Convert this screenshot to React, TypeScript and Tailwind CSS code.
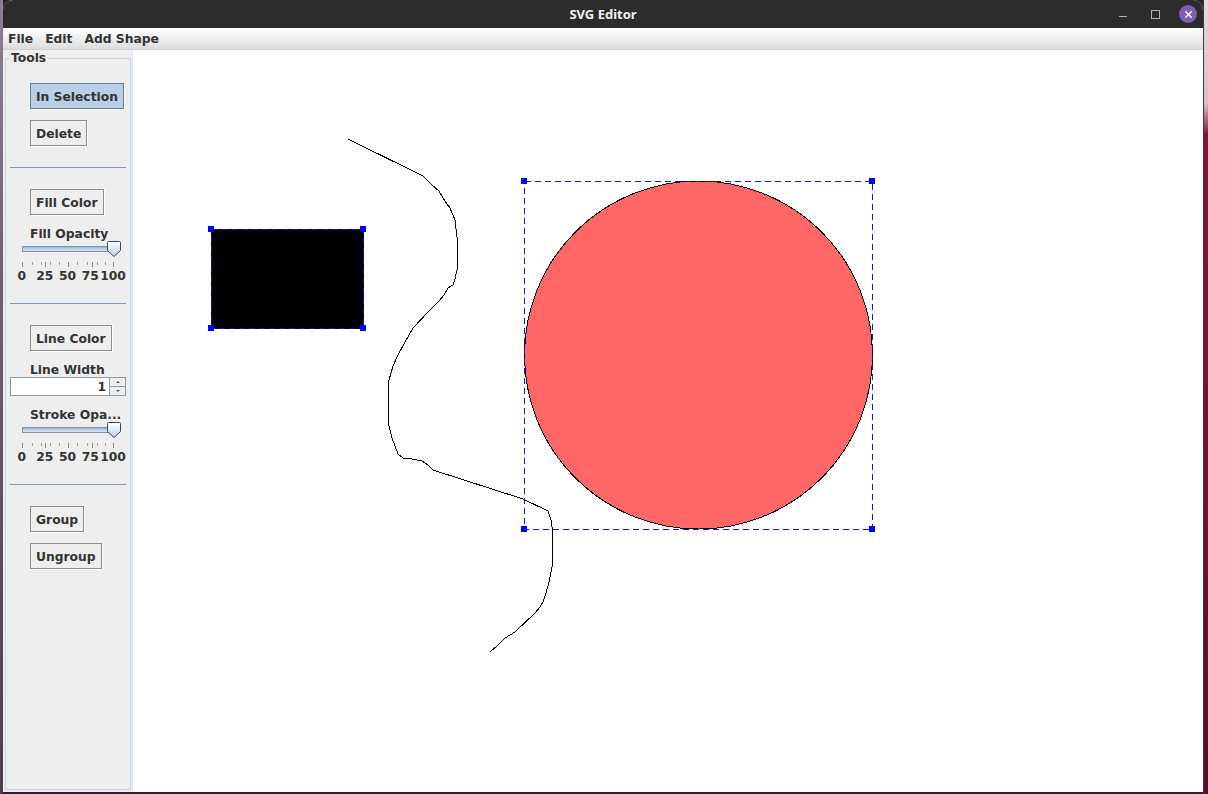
import { useState } from "react";
import { X } from "lucide-react";

const font = "font-['DejaVu_Sans','Liberation_Sans',sans-serif]";

const scribble =
  "M348 139 L423 176 L427 180 L432 185 L439 191 L443 198 L447 204 L450 208 L455 220 L457 237 L457 270 L455 279 L453 285 L448 288 L444 295 L439 301 L428 312 L413 328 L409 335 L405 342 L397 357 L393 366 L391 373 L389 380 L388 400 L388 422 L392 438 L398 454 L403 458 L412 459 L422 461 L428 465 L433 470 L523 499 L548 511 L551 520 L552 527 L553 562 L551 572 L549 582 L546 593 L543 602 L540 607 L535 613 L515 632 L505 638 L497 646 L490 652";

function ToolButton({
  label,
  active,
  onClick,
  className = "",
}: {
  label: string;
  active?: boolean;
  onClick?: () => void;
  className?: string;
}) {
  return (
    <button
      type="button"
      onClick={onClick}
      className={`ml-[24px] block h-[26px] self-start border px-[5px] pt-[2px] text-[12.3px] font-bold leading-none text-[#333333] shadow-[1px_1px_0_#ffffff] ${
        active ? "border-[#63829f] bg-[#b8cfe5]" : "border-[#8e8e8e] bg-[#eeeeee]"
      } ${className}`}
    >
      {label}
    </button>
  );
}

function Separator({ className = "" }: { className?: string }) {
  return <div className={`ml-[4px] h-px w-[116px] shrink-0 bg-[#7d9abb] ${className}`} />;
}

function PanelLabel({ text, className = "" }: { text: string; className?: string }) {
  return (
    <div className={`ml-[24px] h-[16px] whitespace-nowrap pt-px text-[12.3px] font-bold leading-[16px] text-[#333333] ${className}`}>
      {text}
    </div>
  );
}

function OpacitySlider({ id }: { id: string }) {
  const minor = [32, 41, 50, 59, 77, 87, 97, 105];
  const major = [22, 45, 68, 92, 113];
  return (
    <div className="ml-[4px] w-[116px]">
      <svg width="116" height="26" viewBox="10 241 116 26" className="block">
        <defs>
          <linearGradient id={`${id}-track`} x1="0" y1="0" x2="0" y2="1">
            <stop offset="0" stopColor="#8fa9c8" />
            <stop offset="0.5" stopColor="#c3d4e8" />
            <stop offset="1" stopColor="#dfe8f2" />
          </linearGradient>
          <linearGradient id={`${id}-thumb`} x1="0" y1="0" x2="0" y2="1">
            <stop offset="0" stopColor="#ffffff" />
            <stop offset="1" stopColor="#bdd0e6" />
          </linearGradient>
        </defs>
        <rect x="22.5" y="246.5" width="93" height="5" fill={`url(#${id}-track)`} stroke="#7f93ab" />
        <path
          d="M107.5 242.5 Q107.5 241.5 108.5 241.5 L119.5 241.5 Q120.5 241.5 120.5 242.5 L120.5 250.5 L114 256.5 L107.5 250.5 Z"
          fill={`url(#${id}-thumb)`}
          stroke="#3d4654"
        />
        {minor.map((x) => (
          <line key={x} x1={x + 0.5} x2={x + 0.5} y1="262" y2="265" stroke="#a0a0a0" />
        ))}
        {major.map((x) => (
          <line key={x} x1={x + 0.5} x2={x + 0.5} y1="262" y2="267" stroke="#8a8a8a" />
        ))}
      </svg>
      <div className="flex h-[16px] w-[116px] pl-[0.5px] pt-px text-[12.3px] font-bold leading-[16px] text-[#333333]">
        {["0", "25", "50", "75", "100"].map((t) => (
          <span key={t} className="flex w-[22.8px] shrink-0 justify-center whitespace-nowrap">
            {t}
          </span>
        ))}
      </div>
    </div>
  );
}

function Spinner({ value }: { value: number }) {
  return (
    <div className="ml-[4px] flex h-[19px] w-[116px] border border-[#8e9aa6] bg-white">
      <div className="flex-1 pr-[3px] text-right text-[12.3px] font-bold leading-[18px] text-[#333333]">{value}</div>
      <div className="flex w-[16px] flex-col border-l border-[#8e9aa6] bg-[#eeeeee]">
        <div className="flex flex-1 items-center justify-center border-b border-[#8e9aa6]">
          <span className="h-0 w-0 border-x-[2px] border-b-[2px] border-x-transparent border-b-[#555555]" />
        </div>
        <div className="flex flex-1 items-center justify-center">
          <span className="h-0 w-0 border-x-[2px] border-t-[2px] border-x-transparent border-t-[#555555]" />
        </div>
      </div>
    </div>
  );
}

function Handle({ x, y }: { x: number; y: number }) {
  return <rect x={x - 3} y={y - 3} width="6" height="6" fill="#0000ff" />;
}

function Canvas() {
  return (
    <div className="min-w-0 flex-1 bg-white">
      <svg width="1070" height="742" viewBox="133 50 1070 742" className="block" shapeRendering="crispEdges">
        <rect x="211.5" y="229.5" width="152" height="99" fill="#000000" stroke="#000000" />
        <rect x="211.5" y="229.5" width="152" height="99" fill="none" stroke="#1414c8" strokeDasharray="6 4" />
        <Handle x={211} y={229} />
        <Handle x={363} y={229} />
        <Handle x={211} y={328} />
        <Handle x={363} y={328} />

        <path d={scribble} fill="none" stroke="#000000" strokeWidth="1" />

        <circle cx="698.5" cy="355" r="174" fill="#ff6666" stroke="#000000" />
        <rect x="524.5" y="181.5" width="348" height="348" fill="none" stroke="#1414c8" strokeDasharray="6 4" />
        <Handle x={524} y={181} />
        <Handle x={872} y={181} />
        <Handle x={524} y={529} />
        <Handle x={872} y={529} />
      </svg>
    </div>
  );
}

export default function App() {
  const [selecting, setSelecting] = useState(true);

  return (
    <div className={`flex h-[794px] w-[1208px] overflow-hidden bg-[#2a2230] ${font}`}>
      <div className="h-full w-[3px] shrink-0 bg-[linear-gradient(to_bottom,#8d7f99,#6b5a6e_40%,#4d3f4a)]" />

      <div className="flex h-[792px] w-[1200px] shrink-0 flex-col overflow-hidden rounded-t-[10px] bg-[#eeeeee]">
        <div className="relative flex h-[28px] shrink-0 items-center justify-center bg-[#2c2c2c]">
          <span className="pt-px font-['Noto_Sans',sans-serif] text-[13px] font-bold text-[#f2f2f2]">SVG Editor</span>
          <div className="absolute right-[6px] top-0 flex h-[28px] items-center">
            <span className="mr-[24px] mt-[5px] h-px w-[8px] bg-[#b0b0b0]" />
            <span className="mr-[19px] h-[9px] w-[9px] border border-[#b0b0b0]" />
            <span className="flex h-[18px] w-[18px] items-center justify-center rounded-full bg-[#7e5fb5]">
              <X className="h-[11px] w-[11px] text-white" strokeWidth={3} />
            </span>
          </div>
        </div>

        <div className="flex h-[22px] shrink-0 items-center gap-[12px] border-b border-[#d2d2d2] bg-[linear-gradient(to_bottom,#ffffff,#dddddd)] pl-[5px] pt-[2px] text-[12.3px] font-bold text-[#333333]">
          <span>File</span>
          <span>Edit</span>
          <span>Add Shape</span>
        </div>

        <div className="flex min-h-0 flex-1">
          <div className="flex w-[130px] shrink-0 flex-col border-r-2 border-[#e3e9f5] pb-[2px] pl-[2px]">
            <fieldset className="flex min-h-0 w-[126px] flex-1 flex-col border border-[#c5d3e5]">
              <legend className="ml-[3px] px-[2px] text-[12.3px] font-bold leading-[16px] text-[#333333]">Tools</legend>
              <ToolButton
                label="In Selection"
                active={selecting}
                onClick={() => setSelecting(!selecting)}
                className="mt-[17px]"
              />
              <ToolButton label="Delete" className="mt-[11px]" />
              <Separator className="mt-[21px]" />
              <ToolButton label="Fill Color" className="mt-[21px]" />
              <PanelLabel text="Fill Opacity" className="mt-[10px]" />
              <OpacitySlider id="fill" />
              <Separator className="mt-[20px]" />
              <ToolButton label="Line Color" className="mt-[21px]" />
              <PanelLabel text="Line Width" className="mt-[10px]" />
              <Spinner value={1} />
              <PanelLabel text="Stroke Opa..." className="mt-[10px]" />
              <OpacitySlider id="stroke" />
              <Separator className="mt-[20px]" />
              <ToolButton label="Group" className="mt-[21px]" />
              <ToolButton label="Ungroup" className="mt-[11px]" />
            </fieldset>
          </div>
          <Canvas />
        </div>
      </div>

      <div className="h-full w-px shrink-0 bg-[#3a3a3a]" />
      <div className="h-full min-w-0 flex-1 bg-[linear-gradient(to_bottom,#e8d8d8,#d8c0c4_13%,#8a1030_17%,#7a0f2c_60%,#5a0c24)]" />
    </div>
  );
}
